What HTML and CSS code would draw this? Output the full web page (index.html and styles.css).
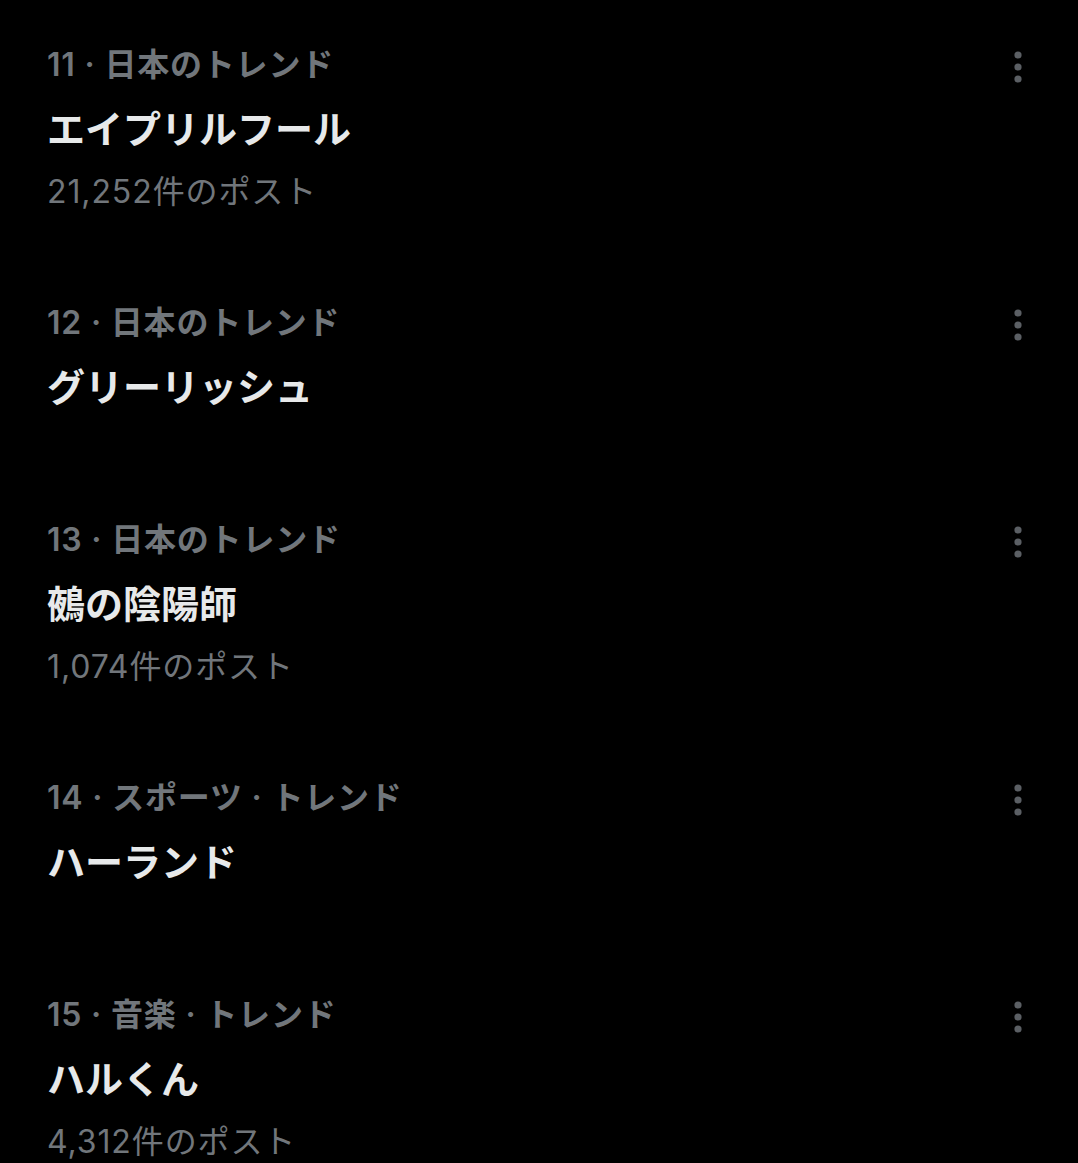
FILE: index.html
```html
<!DOCTYPE html>
<html lang="ja">
<head>
<meta charset="utf-8">
<link rel="stylesheet" href="styles.css">
</head>
<body>
<div class="list">
  <div class="item">
    <div class="head"><span class="cat">11 · 日本のトレンド</span><svg class="more" viewBox="0 0 24 36"><circle cx="12" cy="6" r="3.6"/><circle cx="12" cy="18" r="3.6"/><circle cx="12" cy="30" r="3.6"/></svg></div>
    <div class="title">エイプリルフール</div>
    <div class="count">21,252件のポスト</div>
  </div>
  <div class="item">
    <div class="head"><span class="cat">12 · 日本のトレンド</span><svg class="more" viewBox="0 0 24 36"><circle cx="12" cy="6" r="3.6"/><circle cx="12" cy="18" r="3.6"/><circle cx="12" cy="30" r="3.6"/></svg></div>
    <div class="title">グリーリッシュ</div>
  </div>
  <div class="item">
    <div class="head"><span class="cat">13 · 日本のトレンド</span><svg class="more" viewBox="0 0 24 36"><circle cx="12" cy="6" r="3.6"/><circle cx="12" cy="18" r="3.6"/><circle cx="12" cy="30" r="3.6"/></svg></div>
    <div class="title">鵺の陰陽師</div>
    <div class="count">1,074件のポスト</div>
  </div>
  <div class="item">
    <div class="head"><span class="cat">14 · スポーツ · トレンド</span><svg class="more" viewBox="0 0 24 36"><circle cx="12" cy="6" r="3.6"/><circle cx="12" cy="18" r="3.6"/><circle cx="12" cy="30" r="3.6"/></svg></div>
    <div class="title">ハーランド</div>
  </div>
  <div class="item">
    <div class="head"><span class="cat">15 · 音楽 · トレンド</span><svg class="more" viewBox="0 0 24 36"><circle cx="12" cy="6" r="3.6"/><circle cx="12" cy="18" r="3.6"/><circle cx="12" cy="30" r="3.6"/></svg></div>
    <div class="title">ハルくん</div>
    <div class="count">4,312件のポスト</div>
  </div>
</div>
</body>
</html>
```

FILE: styles.css
```css
html, body {
  margin: 0;
  padding: 0;
  background: #000;
}
body {
  font-family: Inter, "Noto Sans CJK JP", sans-serif;
  width: 1078px;
  height: 1163px;
  overflow: hidden;
}
.list {
  display: flex;
  flex-direction: column;
}
.item {
  padding: 43px 48px 46px 47px;
}
.head {
  display: flex;
  align-items: center;
  justify-content: space-between;
  height: 44px;
}
.cat {
  font-size: 32px;
  font-weight: 600;
  color: #71767b;
  line-height: 44px;
  letter-spacing: 0.8px;
}
.more {
  width: 24px;
  height: 36px;
  fill: #5b5f64;
  margin-top: 4px;
}
.title {
  font-size: 38px;
  font-weight: 700;
  color: #e7e9ea;
  line-height: 84px;
}
.count {
  font-size: 32px;
  font-weight: 400;
  color: #71767b;
  line-height: 41px;
  letter-spacing: 0.9px;
}
```
